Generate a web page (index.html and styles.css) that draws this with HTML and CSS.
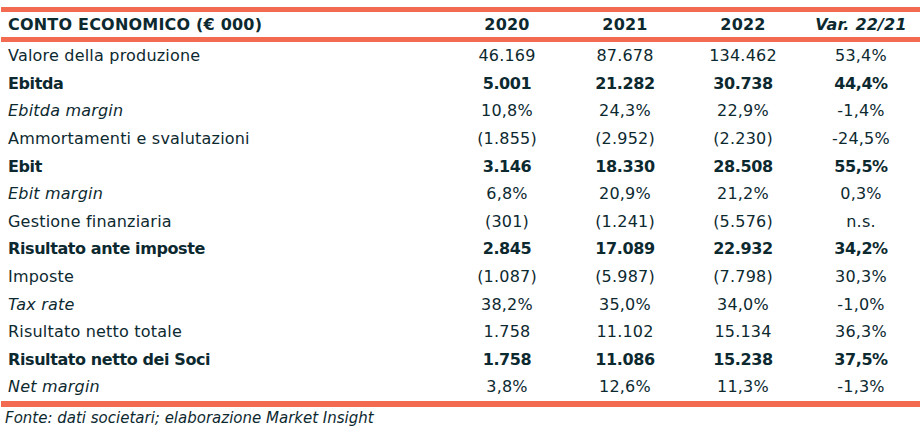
FILE: index.html
```html
<!DOCTYPE html>
<html lang="it">
<head>
<meta charset="utf-8">
<title>Conto economico</title>
<link rel="stylesheet" href="styles.css">
</head>
<body>
<div class="wrap">
<table class="ce">
  <colgroup>
    <col class="c-label"><col class="c-num"><col class="c-num"><col class="c-num"><col class="c-num">
  </colgroup>
  <thead>
    <tr><th class="label">CONTO ECONOMICO (€ 000)</th><th>2020</th><th>2021</th><th>2022</th><th><i>Var. 22/21</i></th></tr>
  </thead>
  <tbody>
    <tr><td class="label">Valore della produzione</td><td>46.169</td><td>87.678</td><td>134.462</td><td>53,4%</td></tr>
    <tr class="b"><td class="label">Ebitda</td><td>5.001</td><td>21.282</td><td>30.738</td><td>44,4%</td></tr>
    <tr><td class="label it">Ebitda margin</td><td>10,8%</td><td>24,3%</td><td>22,9%</td><td>-1,4%</td></tr>
    <tr><td class="label">Ammortamenti e svalutazioni</td><td>(1.855)</td><td>(2.952)</td><td>(2.230)</td><td>-24,5%</td></tr>
    <tr class="b"><td class="label">Ebit</td><td>3.146</td><td>18.330</td><td>28.508</td><td>55,5%</td></tr>
    <tr><td class="label it">Ebit margin</td><td>6,8%</td><td>20,9%</td><td>21,2%</td><td>0,3%</td></tr>
    <tr><td class="label">Gestione finanziaria</td><td>(301)</td><td>(1.241)</td><td>(5.576)</td><td>n.s.</td></tr>
    <tr class="b"><td class="label">Risultato ante imposte</td><td>2.845</td><td>17.089</td><td>22.932</td><td>34,2%</td></tr>
    <tr><td class="label">Imposte</td><td>(1.087)</td><td>(5.987)</td><td>(7.798)</td><td>30,3%</td></tr>
    <tr><td class="label it">Tax rate</td><td>38,2%</td><td>35,0%</td><td>34,0%</td><td>-1,0%</td></tr>
    <tr><td class="label">Risultato netto totale</td><td>1.758</td><td>11.102</td><td>15.134</td><td>36,3%</td></tr>
    <tr class="b"><td class="label">Risultato netto dei Soci</td><td>1.758</td><td>11.086</td><td>15.238</td><td>37,5%</td></tr>
    <tr><td class="label it">Net margin</td><td>3,8%</td><td>12,6%</td><td>11,3%</td><td>-1,3%</td></tr>
  </tbody>
</table>
<p class="source">Fonte: dati societari; elaborazione Market Insight</p>
</div>
</body>
</html>
```

FILE: styles.css
```css
html, body {
  margin: 0;
  padding: 0;
  background: #ffffff;
}
.wrap {
  padding: 7px 1px 0 1px;
  font-family: "DejaVu Sans", "Liberation Sans", sans-serif;
  color: #0d2930;
}
.ce {
  width: 919px;
  border-collapse: collapse;
  table-layout: fixed;
  font-size: 16px;
  letter-spacing: 0.2px;
}
.c-label { width: 447px; }
.c-num { width: 118px; }
.ce thead tr {
  border-top: 5px solid #f26b50;
  border-bottom: 5px solid #f26b50;
}
.ce tbody tr:last-child {
  border-bottom: 6px solid #f26b50;
}
.ce th {
  height: 25px;
  padding: 0;
  font-weight: bold;
  text-align: center;
  vertical-align: middle;
}
.ce th i { font-style: italic; }
.ce td {
  height: 27.6px;
  padding: 0;
  text-align: center;
  vertical-align: middle;
  white-space: nowrap;
}
.ce .label {
  text-align: left;
  padding-left: 7px;
}
.ce tr.b td {
  font-weight: bold;
  letter-spacing: -0.4px;
}
.ce .it { font-style: italic; }
.source {
  margin: 2px 0 0 4px;
  font-size: 15px;
  font-style: italic;
}
```
